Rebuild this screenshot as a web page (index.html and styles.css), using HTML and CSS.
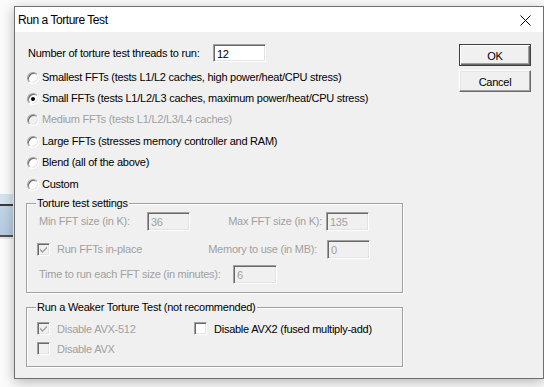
FILE: index.html
```html
<!DOCTYPE html>
<html>
<head>
<meta charset="utf-8">
<link rel="stylesheet" href="styles.css">
</head>
<body>
<div class="desktop">
  <div class="behind"></div>
  <div class="window">
    <div class="titlebar">
      <span class="title">Run a Torture Test</span>
      <svg class="close" width="11" height="11" viewBox="0 0 11 11"><path d="M0.5 0.5 L10.5 10.5 M10.5 0.5 L0.5 10.5" stroke="#000" stroke-width="1" fill="none"/></svg>
    </div>
    <div class="client">
      <div class="main">
        <div class="threads">
          <span class="threads-label">Number of torture test threads to run:</span>
          <span class="edit threads-edit">12</span>
        </div>
        <div class="radios">
          <div class="radio-row"><span class="radio"></span><span>Smallest FFTs (tests L1/L2 caches, high power/heat/CPU stress)</span></div>
          <div class="radio-row"><span class="radio on"></span><span>Small FFTs (tests L1/L2/L3 caches, maximum power/heat/CPU stress)</span></div>
          <div class="radio-row disabled"><span class="radio"></span><span>Medium FFTs (tests L1/L2/L3/L4 caches)</span></div>
          <div class="radio-row"><span class="radio"></span><span>Large FFTs (stresses memory controller and RAM)</span></div>
          <div class="radio-row"><span class="radio"></span><span>Blend (all of the above)</span></div>
          <div class="radio-row"><span class="radio"></span><span>Custom</span></div>
        </div>
        <div class="group group1">
          <div class="legend">Torture test settings</div>
          <div class="grow row1 disabled">
            <span class="lbl min-lbl">Min FFT size (in K):</span>
            <span class="edit field">36</span>
            <span class="lbl max-lbl">Max FFT size (in K):</span>
            <span class="edit field">135</span>
          </div>
          <div class="grow row2 disabled">
            <span class="check-wrap inplace"><span class="check on"><svg width="9" height="9" viewBox="0 0 9 9"><path d="M1 3.5 L3.5 6 L8 1.5 L8 3.5 L3.5 8 L1 5.5 Z" fill="#a0a0a0"/></svg></span><span>Run FFTs in-place</span></span>
            <span class="lbl mem-lbl">Memory to use (in MB):</span>
            <span class="edit field">0</span>
          </div>
          <div class="grow row3 disabled">
            <span class="lbl time-lbl">Time to run each FFT size (in minutes):</span>
            <span class="edit field time-edit">6</span>
          </div>
        </div>
        <div class="group group2">
          <div class="legend">Run a Weaker Torture Test (not recommended)</div>
          <div class="crow crow1">
            <span class="check-wrap avx512 disabled"><span class="check on"><svg width="9" height="9" viewBox="0 0 9 9"><path d="M1 3.5 L3.5 6 L8 1.5 L8 3.5 L3.5 8 L1 5.5 Z" fill="#a0a0a0"/></svg></span><span>Disable AVX-512</span></span>
            <span class="check-wrap"><span class="check enabled"></span><span>Disable AVX2 (fused multiply-add)</span></span>
          </div>
          <div class="crow crow2">
            <span class="check-wrap disabled"><span class="check"></span><span>Disable AVX</span></span>
          </div>
        </div>
      </div>
      <div class="buttons">
        <div class="btn default">OK</div>
        <div class="btn">Cancel</div>
      </div>
    </div>
  </div>
</div>
</body>
</html>
```

FILE: styles.css
```css
html, body {
  margin: 0;
  padding: 0;
}
body {
  width: 544px;
  height: 387px;
  overflow: hidden;
  background: #fbfbfb;
  font-family: "Liberation Sans", Arial, sans-serif;
  font-size: 11px;
  letter-spacing: -0.25px;
  color: #000;
}
.desktop {
  position: relative;
  width: 544px;
  height: 387px;
  padding: 6px 0 0 14px;
  box-sizing: border-box;
}
.behind {
  position: absolute;
  left: 0;
  top: 194px;
  width: 13px;
  height: 45px;
  background: linear-gradient(#d6e4f1 0, #d6e4f1 10px, #3c3c3c 10px, #3c3c3c 12px, #c2d5e8 12px, #b5cadf 41px, #505050 41px, #505050 43px, #e6e6e6 43px);
}
.window {
  position: relative;
  width: 530px;
  height: 373px;
  box-sizing: border-box;
  border: 1px solid #6f6f6f;
  background: #f0f0f0;
  box-shadow: 0 3px 12px rgba(0, 0, 0, 0.28);
  display: flex;
  flex-direction: column;
}
.titlebar {
  height: 25px;
  background: #fff;
  display: flex;
  align-items: center;
  justify-content: space-between;
  padding: 0 12px 0 3px;
}
.title {
  font-family: "Liberation Sans", Arial, sans-serif;
  font-size: 12px;
  letter-spacing: -0.45px;
  padding-top: 1px;
}
.close {
  display: block;
  margin-top: 1px;
}
.client {
  flex: 1;
  display: flex;
  justify-content: space-between;
  padding: 12px 12px 0 11px;
}
.main {
  width: 377px;
  display: flex;
  flex-direction: column;
}
.threads {
  display: flex;
  align-items: center;
  height: 18px;
  padding-left: 2px;
}
.threads-label {
  width: 185px;
}
.edit {
  box-sizing: border-box;
  display: flex;
  align-items: center;
  padding-left: 3px;
  padding-top: 1px;
  background: #fff;
  border-style: solid;
  border-width: 1px;
  border-color: #a0a0a0 #ffffff #ffffff #a0a0a0;
  box-shadow: inset 1px 1px 0 #696969, inset -1px -1px 0 #e3e3e3;
}
.threads-edit {
  width: 53px;
  height: 18px;
}
.radios {
  margin-top: 4px;
  display: flex;
  flex-direction: column;
  padding-left: 1px;
}
.radio-row {
  height: 21.4px;
  display: flex;
  align-items: center;
}
.radio {
  width: 12px;
  height: 12px;
  box-sizing: border-box;
  border-radius: 50%;
  border: 1px solid;
  border-color: #a0a0a0 #ffffff #ffffff #a0a0a0;
  box-shadow: inset 1px 1px 0 #696969, inset -1px -1px 0 #e3e3e3;
  background: #fff;
  margin-right: 3px;
  margin-top: 2px;
  display: flex;
  align-items: center;
  justify-content: center;
}
.radio.on::after {
  content: "";
  width: 4px;
  height: 4px;
  border-radius: 50%;
  background: #000;
}
.disabled {
  color: #a0a0a0;
}
.disabled .radio,
.disabled .edit,
.disabled .check {
  background: #f0f0f0;
}
.group {
  box-sizing: border-box;
  border: 1px solid #a0a0a0;
  box-shadow: inset 1px 1px 0 #fff, 1px 1px 0 #fff;
  padding: 0 0 0 10px;
  display: flex;
  flex-direction: column;
}
.group1 {
  margin-top: 8.6px;
  height: 90px;
}
.group2 {
  margin-top: 14px;
  height: 60px;
}
.legend {
  width: fit-content;
  margin: -7px 0 0 -1px;
  padding: 0 1px;
  line-height: 13px;
  background: #f0f0f0;
  color: #000;
}
.grow {
  display: flex;
  align-items: center;
  height: 19px;
}
.row1 { margin-top: 2px; }
.row2 { margin-top: 9px; }
.row3 { margin-top: 6px; }
.lbl {
  display: block;
}
.min-lbl {
  width: 108px;
  padding-left: 2px;
}
.field {
  width: 43px;
  height: 19px;
}
.max-lbl {
  width: 136px;
  text-align: right;
  padding-right: 4px;
  box-sizing: border-box;
}
.check-wrap {
  display: flex;
  align-items: center;
}
.inplace {
  width: 153px;
}
.mem-lbl {
  width: 137px;
  text-align: right;
  padding-right: 10px;
  box-sizing: border-box;
}
.time-lbl {
  width: 194px;
  padding-left: 2px;
}
.time-edit {
  width: 44px;
}
.check {
  width: 13px;
  height: 13px;
  box-sizing: border-box;
  border: 1px solid;
  border-color: #a0a0a0 #ffffff #ffffff #a0a0a0;
  box-shadow: inset 1px 1px 0 #696969, inset -1px -1px 0 #e3e3e3;
  background: #fff;
  margin-right: 7px;
  display: flex;
  align-items: center;
  justify-content: center;
}
.check svg {
  display: block;
}
.crow {
  display: flex;
  align-items: center;
  height: 14px;
}
.crow1 { margin-top: 8px; }
.crow2 { margin-top: 6px; }
.avx512 {
  width: 157px;
}
.buttons {
  display: flex;
  flex-direction: column;
  gap: 4px;
}
.btn {
  width: 72px;
  height: 22px;
  box-sizing: border-box;
  display: flex;
  align-items: center;
  justify-content: center;
  background: #f0f0f0;
  border-style: solid;
  border-width: 1px;
  border-color: #ffffff #696969 #696969 #ffffff;
  box-shadow: inset -1px -1px 0 #a0a0a0, inset 1px 1px 0 #e3e3e3;
  padding-top: 1px;
}
.btn.default {
  border-color: #404040;
  box-shadow: inset 1px 1px 0 #fff, inset -1px -1px 0 #696969, inset -2px -2px 0 #a0a0a0;
}
```
